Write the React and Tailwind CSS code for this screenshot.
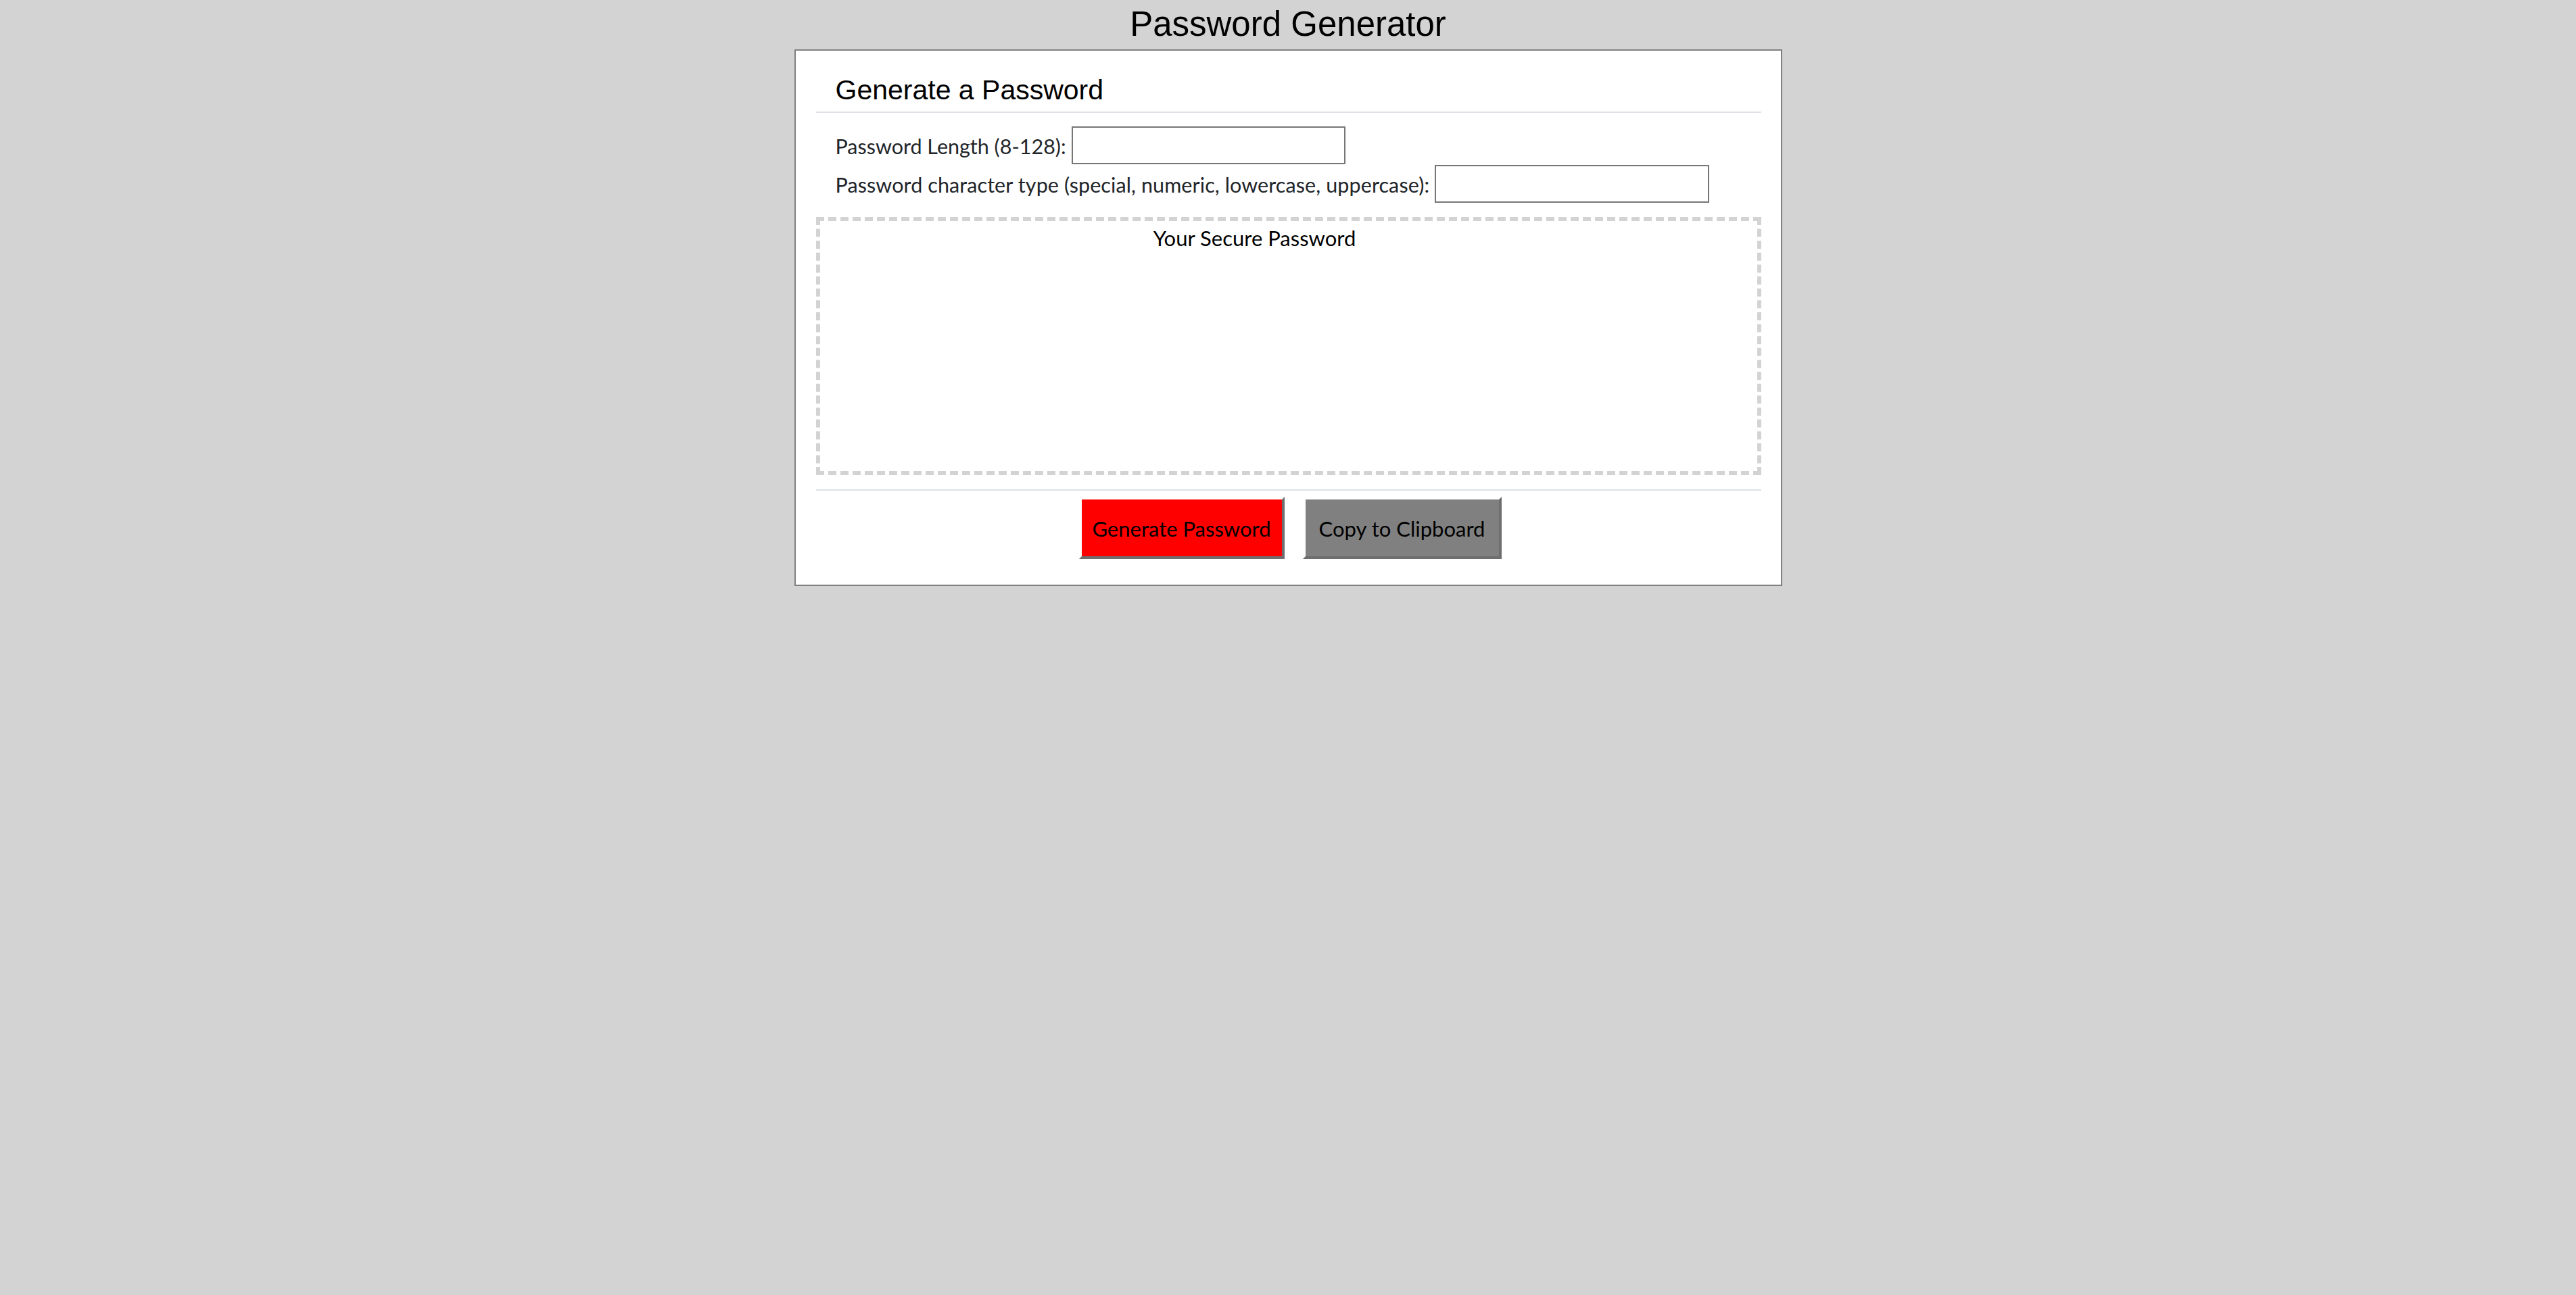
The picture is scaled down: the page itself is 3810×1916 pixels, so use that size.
import React from "react";

export default function App() {
  const body = "font-['Lato','Open_Sans',sans-serif]";
  return (
    <div className="min-h-screen w-full bg-[#d3d3d3] text-black">
      <h1 className="m-0 pt-[6px] pb-[8px] text-center text-[51px] leading-[59px] font-normal font-['Liberation_Sans',Arial,sans-serif]">
        Password Generator
      </h1>
      <div className="mx-auto w-[1461px] bg-white border-2 border-[#808080] pl-[30px] pr-[29px]">
        <div className="pt-[35px] pb-[8px] px-[29px] border-b-2 border-[#dee2e6]">
          <h2 className="m-0 text-[41px] leading-[47px] font-normal font-['Liberation_Sans',Arial,sans-serif]">
            Generate a Password
          </h2>
        </div>
        <div className={`pt-[20px] px-[29px] flex flex-col gap-px text-[30.5px] text-[#212529] ${body}`}>
          <div className="flex items-center gap-[8px] h-[56px]">
            <label htmlFor="len" className="pt-[3px]">Password Length (8-128):</label>
            <input id="len" type="text" className="w-[405px] h-[56px] border-2 border-[#767676] bg-white outline-none" />
          </div>
          <div className="flex items-center gap-[8px] h-[56px]">
            <label htmlFor="type" className="pt-[3px] tracking-[0.1px]">Password character type (special, numeric, lowercase, uppercase):</label>
            <input id="type" type="text" className="w-[406px] h-[56px] border-2 border-[#767676] bg-white outline-none" />
          </div>
        </div>
        <div className={`mt-[21px] h-[382px] border-[6px] border-dashed border-[#d3d3d3] pt-[4px] pr-[100px] text-center text-[31px] leading-[42px] text-black ${body}`}>
          Your Secure Password
        </div>
        <div className={`mt-[21px] border-t-2 border-[#dee2e6] pt-[9px] pb-[38px] pl-[5px] flex justify-center gap-[27px] text-[31px] text-black ${body}`}>
          <button className="w-[304px] h-[92px] bg-[#ff0000] border-[4px] border-t-white border-l-white border-r-[#6e6e6e] border-b-[#6e6e6e] flex items-center justify-center pt-[2px]">
            Generate Password
          </button>
          <button className="w-[294px] h-[92px] bg-[#808080] border-[4px] border-t-white border-l-white border-r-[#6e6e6e] border-b-[#6e6e6e] flex items-center justify-center pt-[2px]">
            Copy to Clipboard
          </button>
        </div>
      </div>
    </div>
  );
}
